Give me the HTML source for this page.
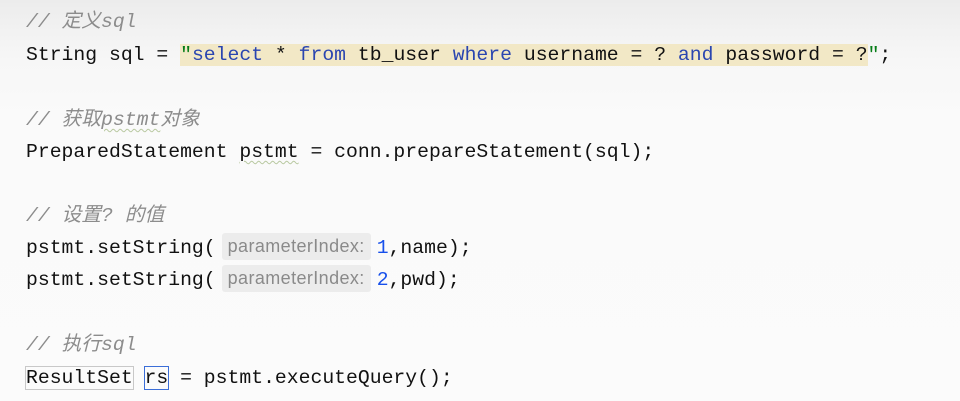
<!DOCTYPE html>
<html><head><meta charset="utf-8"><style>
body{margin:0;width:960px;height:401px;overflow:hidden;background:linear-gradient(#ececec 0px,#f7f7f7 60px,#fafafa 120px,#fbfbfb 401px);font-family:"Liberation Mono","Noto Sans CJK SC",monospace;font-size:19.75px;color:#111}
.l{position:absolute;left:26px;height:32px;line-height:32px;white-space:pre}
.c{color:#8c8c8c;font-style:italic}
.k{color:#2a45b0}
.s{color:#067d17}
.hl{background:#f2e8c6}
.h{display:inline-block;background:#ececec;color:#8a8a8a;font-family:"Liberation Sans",sans-serif;font-size:18px;letter-spacing:0.4px;line-height:27px;padding:0 6px;border-radius:3px;margin:0 6px 0 6px;vertical-align:1px}
.n{color:#1750eb}
.b1{outline:1px solid #c8c8c8}
.b2{outline:1.5px solid #3b6ed8}
.w{text-decoration:underline wavy #b8c8a0;text-decoration-thickness:1px;text-underline-offset:3px}
</style></head><body>
<div class="l c" style="top:6px">// 定义sql</div>
<div class="l" style="top:39px">String sql = <span class="hl"><span class="s">"</span><span class="k">select</span> * <span class="k">from</span> tb_user <span class="k">where</span> username = ? <span class="k">and</span> password = ?</span><span class="s">"</span>;</div>
<div class="l c" style="top:104px">// 获取<span class="w">pstmt</span>对象</div>
<div class="l" style="top:136px">PreparedStatement <span class="w">pstmt</span> = conn.prepareStatement(sql);</div>
<div class="l c" style="top:200px">// 设置? 的值</div>
<div class="l" style="top:232px">pstmt.setString(<span class="h">parameterIndex:</span><span class="n">1</span>,name);</div>
<div class="l" style="top:264px">pstmt.setString(<span class="h">parameterIndex:</span><span class="n">2</span>,pwd);</div>
<div class="l c" style="top:329px">// 执行sql</div>
<div class="l" style="top:362px"><span class="b1">ResultSet</span> <span class="b2">rs</span> = pstmt.executeQuery();</div>
</body></html>
